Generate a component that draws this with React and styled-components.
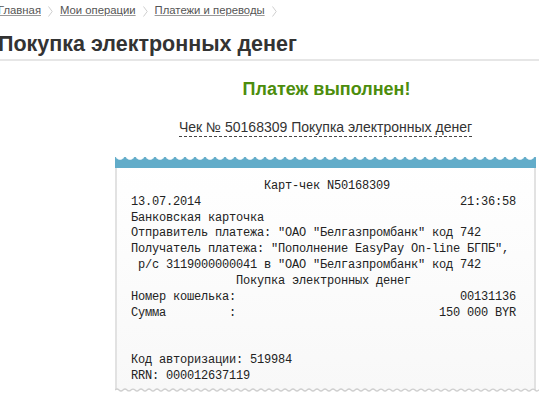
import React from "react";
import styled, { createGlobalStyle } from "styled-components";

const Global = createGlobalStyle`
  html, body { margin: 0; padding: 0; background: #fff; }
  body { font-family: "Liberation Sans", Arial, sans-serif; overflow: hidden; }
`;

const Page = styled.div`
  width: 539px;
  height: 395px;
  overflow: hidden;
  position: relative;
`;

const Breadcrumbs = styled.nav`
  display: flex;
  align-items: center;
  height: 20px;
  margin-left: -2px;
  font-size: 11.3px;
`;

const Crumb = styled.a`
  color: #555;
  text-decoration: underline;
  text-decoration-color: #999;
  text-underline-offset: 1px;
  white-space: nowrap;
`;

const Sep = styled.svg`
  display: block;
  margin: 2px 7px 0 7px;
  flex: none;
`;

const TitleBar = styled.div`
  margin-top: 12px;
  border-bottom: 2px solid #e6e6e6;
  padding-bottom: 3px;
`;

const Title = styled.h1`
  margin: 0 0 0 -2px;
  font-size: 21.5px;
  line-height: 24px;
  font-weight: bold;
  color: #333;
`;

const Content = styled.div`
  width: 421px;
  margin-left: 115px;
  display: flex;
  flex-direction: column;
  align-items: center;
`;

const Success = styled.div`
  margin-top: 18px;
  font-size: 18px;
  line-height: 20px;
  font-weight: bold;
  color: #4c8d0c;
  transform: translateX(1px);
`;

const CheckLink = styled.a`
  margin-top: 20px;
  font-size: 14px;
  line-height: 16px;
  color: #333;
  text-decoration: none;
  border-bottom: 1px dashed #444;
  padding-bottom: 1px;
`;

const Receipt = styled.div`
  align-self: stretch;
  margin-top: 20px;
  position: relative;
  background: linear-gradient(#ffffff, #f8f8f8);
  border-left: 2px solid #e2e2e2;
  border-right: 2px solid #e2e2e2;
  padding-bottom: 5px;
`;

const WaveTop = styled.div`
  height: 11px;
  background-color: #62acc9;
  background-image: radial-gradient(circle at 5px -2px, #ffffff 0, #ffffff 4px, #cfe5ee 4.6px, transparent 5.2px);
  background-size: 10px 11px;
  background-repeat: repeat-x;
  margin: 0 -2px;
`;

const Slip = styled.pre`
  margin: 0;
  padding: 11px 0 0 14px;
  font-family: "Liberation Mono", "Courier New", monospace;
  font-size: 12px;
  letter-spacing: -0.2px;
  line-height: 15.83px;
  color: #222;
`;

const WaveBottom = styled.svg`
  position: absolute;
  left: -2px;
  bottom: -6px;
  display: block;
`;

const lines = [
  " ".repeat(19) + "Карт-чек N50168309",
  "13.07.2014" + " ".repeat(37) + "21:36:58",
  "Банковская карточка",
  'Отправитель платежа: "ОАО "Белгазпромбанк" код 742',
  'Получатель платежа: "Пополнение EasyPay On-line БГПБ",',
  ' р/с 3119000000041 в "ОАО "Белгазпромбанк" код 742',
  " ".repeat(15) + "Покупка электронных денег",
  "Номер кошелька:" + " ".repeat(32) + "00131136",
  "Сумма" + " ".repeat(9) + ":" + " ".repeat(29) + "150 000 BYR",
  "",
  "",
  "Код авторизации: 519984",
  "RRN: 000012637119",
];

function Chevron() {
  return (
    <Sep width="5" height="11" viewBox="0 0 5 11">
      <path d="M0.5 0.5 L4.2 5.5 L0.5 10.5" fill="none" stroke="#cfcfcf" strokeWidth="1" />
    </Sep>
  );
}

function Wave() {
  const w = 425;
  let d = "M0 2";
  for (let x = 0; x < w; x += 8) {
    d += ` Q${x + 2} 0 ${x + 4} 2 T${x + 8} 2`;
  }
  return (
    <WaveBottom width={w} height="8" viewBox={`0 0 ${w} 8`}>
      <path d={`${d} L${w} 8 L0 8 Z`} fill="#fff" />
      <path d={d} fill="none" stroke="#cfcfcf" strokeWidth="1.2" />
    </WaveBottom>
  );
}

export default function App() {
  return (
    <Page>
      <Global />
      <Breadcrumbs>
        <Crumb href="#">Главная</Crumb>
        <Chevron />
        <Crumb href="#">Мои операции</Crumb>
        <Chevron />
        <Crumb href="#">Платежи и переводы</Crumb>
        <Chevron />
      </Breadcrumbs>
      <TitleBar>
        <Title>Покупка электронных денег</Title>
      </TitleBar>
      <Content>
        <Success>Платеж выполнен!</Success>
        <CheckLink href="#">Чек № 50168309 Покупка электронных денег</CheckLink>
        <Receipt>
          <WaveTop />
          <Slip>{lines.join("\n")}</Slip>
          <Wave />
        </Receipt>
      </Content>
    </Page>
  );
}
